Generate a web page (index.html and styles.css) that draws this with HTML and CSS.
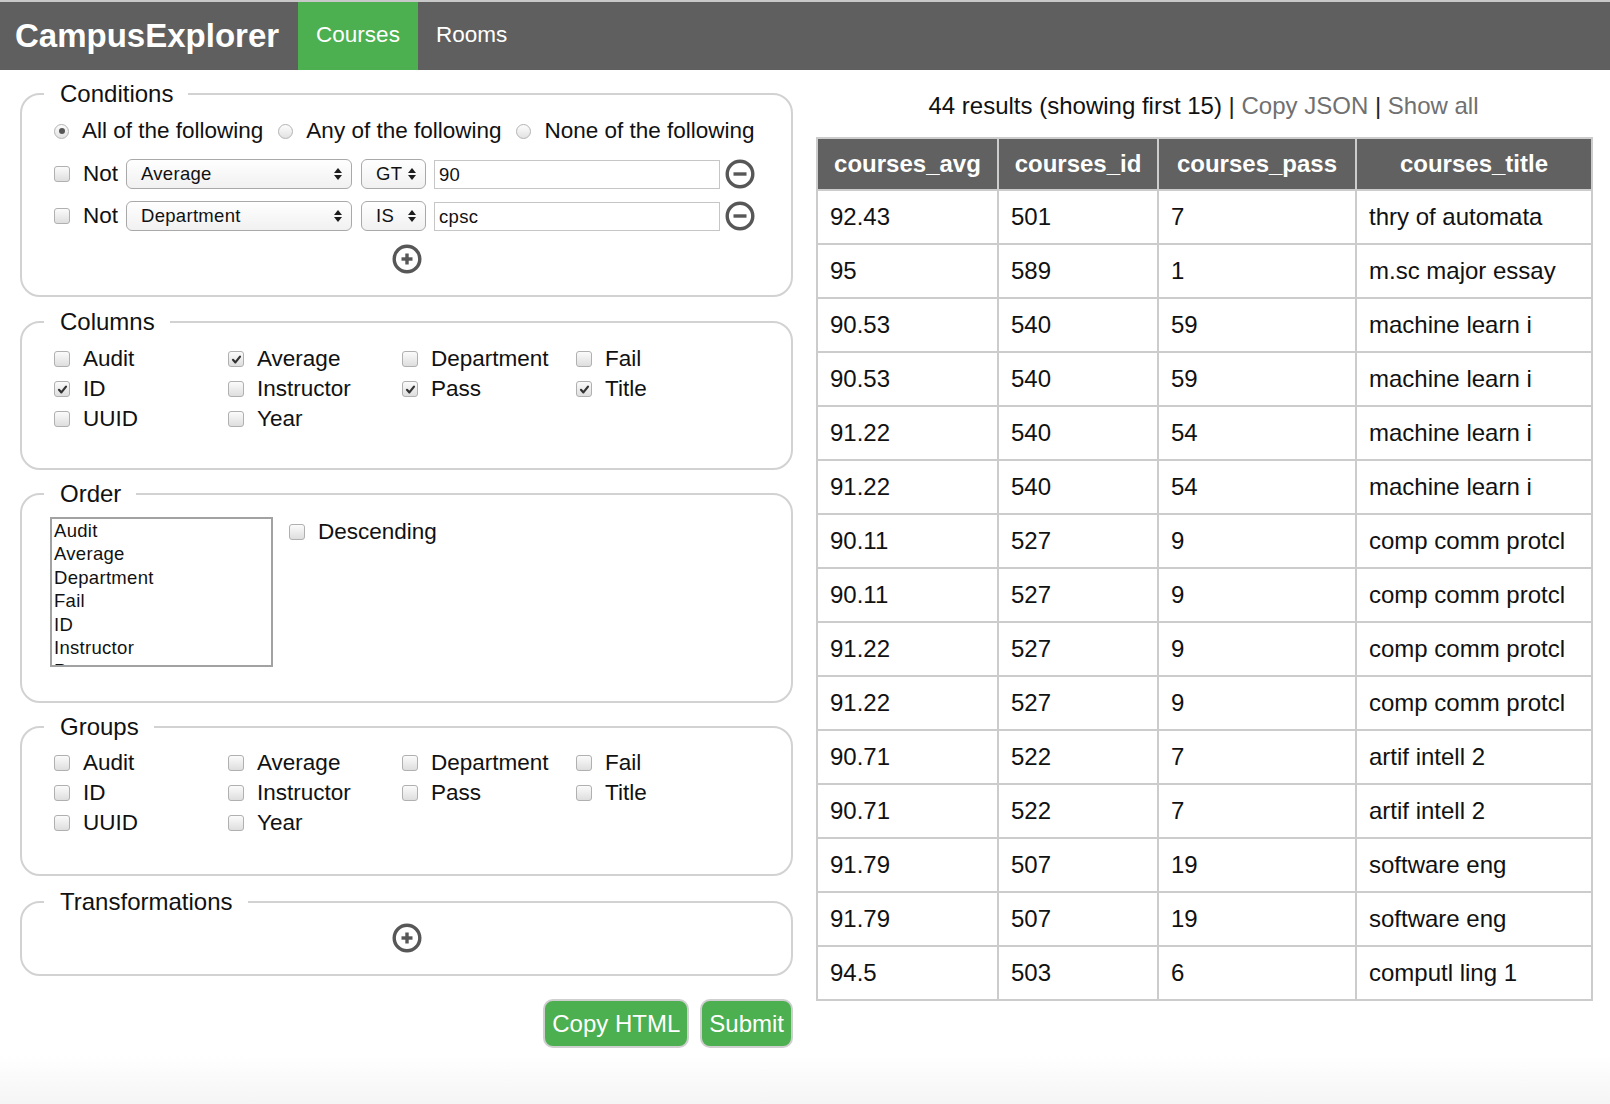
FILE: index.html
```html
<!DOCTYPE html>
<html lang="en">
<head>
<meta charset="utf-8">
<title>CampusExplorer</title>
<link rel="stylesheet" href="styles.css">
</head>
<body>
<header class="nav">
  <div class="brand">CampusExplorer</div>
  <a class="tab active">Courses</a>
  <a class="tab">Rooms</a>
</header>
<main class="main">
  <section class="form">
    <fieldset class="fs fs-cond">
      <legend>Conditions</legend>
      <div class="radios">
        <label class="rad"><span class="rb on"></span>All of the following</label>
        <label class="rad"><span class="rb"></span>Any of the following</label>
        <label class="rad"><span class="rb"></span>None of the following</label>
      </div>
      <div class="cond-row first">
        <span class="cb"></span><span class="not">Not</span>
        <div class="sel sel-field"><span>Average</span><svg width="8" height="14" viewBox="0 0 8 14"><polygon points="0,6 4,1 8,6" /><polygon points="0,8 4,13 8,8" /></svg></div>
        <div class="sel sel-op"><span>GT</span><svg width="8" height="14" viewBox="0 0 8 14"><polygon points="0,6 4,1 8,6" /><polygon points="0,8 4,13 8,8" /></svg></div>
        <div class="inp">90</div>
        <svg class="icon" width="30" height="30" viewBox="0 0 30 30"><circle cx="15" cy="15" r="12.8" /><line x1="8.5" y1="15" x2="21.5" y2="15" /></svg>
      </div>
      <div class="cond-row">
        <span class="cb"></span><span class="not">Not</span>
        <div class="sel sel-field"><span>Department</span><svg width="8" height="14" viewBox="0 0 8 14"><polygon points="0,6 4,1 8,6" /><polygon points="0,8 4,13 8,8" /></svg></div>
        <div class="sel sel-op"><span>IS</span><svg width="8" height="14" viewBox="0 0 8 14"><polygon points="0,6 4,1 8,6" /><polygon points="0,8 4,13 8,8" /></svg></div>
        <div class="inp">cpsc</div>
        <svg class="icon" width="30" height="30" viewBox="0 0 30 30"><circle cx="15" cy="15" r="12.8" /><line x1="8.5" y1="15" x2="21.5" y2="15" /></svg>
      </div>
      <div class="add">
        <svg class="icon" width="30" height="30" viewBox="0 0 30 30"><circle cx="15" cy="15" r="12.8" /><line x1="9.5" y1="15" x2="20.5" y2="15" /><line x1="15" y1="9.5" x2="15" y2="20.5" /></svg>
      </div>
    </fieldset>

    <fieldset class="fs fs-cols">
      <legend>Columns</legend>
      <div class="grid">
        <label class="chk"><span class="cb"></span>Audit</label>
        <label class="chk"><span class="cb on"><svg width="13" height="13" viewBox="0 0 13 13"><path d="M3 6.8 L5.4 9.4 L10 3.6" /></svg></span>Average</label>
        <label class="chk"><span class="cb"></span>Department</label>
        <label class="chk"><span class="cb"></span>Fail</label>
        <label class="chk"><span class="cb on"><svg width="13" height="13" viewBox="0 0 13 13"><path d="M3 6.8 L5.4 9.4 L10 3.6" /></svg></span>ID</label>
        <label class="chk"><span class="cb"></span>Instructor</label>
        <label class="chk"><span class="cb on"><svg width="13" height="13" viewBox="0 0 13 13"><path d="M3 6.8 L5.4 9.4 L10 3.6" /></svg></span>Pass</label>
        <label class="chk"><span class="cb on"><svg width="13" height="13" viewBox="0 0 13 13"><path d="M3 6.8 L5.4 9.4 L10 3.6" /></svg></span>Title</label>
        <label class="chk"><span class="cb"></span>UUID</label>
        <label class="chk"><span class="cb"></span>Year</label>
      </div>
    </fieldset>

    <fieldset class="fs fs-order">
      <legend>Order</legend>
      <div class="order-row">
        <div class="listbox">
          <div>Audit</div>
          <div>Average</div>
          <div>Department</div>
          <div>Fail</div>
          <div>ID</div>
          <div>Instructor</div>
          <div>Pass</div>
        </div>
        <label class="chk desc"><span class="cb"></span>Descending</label>
      </div>
    </fieldset>

    <fieldset class="fs fs-groups">
      <legend>Groups</legend>
      <div class="grid">
        <label class="chk"><span class="cb"></span>Audit</label>
        <label class="chk"><span class="cb"></span>Average</label>
        <label class="chk"><span class="cb"></span>Department</label>
        <label class="chk"><span class="cb"></span>Fail</label>
        <label class="chk"><span class="cb"></span>ID</label>
        <label class="chk"><span class="cb"></span>Instructor</label>
        <label class="chk"><span class="cb"></span>Pass</label>
        <label class="chk"><span class="cb"></span>Title</label>
        <label class="chk"><span class="cb"></span>UUID</label>
        <label class="chk"><span class="cb"></span>Year</label>
      </div>
    </fieldset>

    <fieldset class="fs fs-trans">
      <legend>Transformations</legend>
      <div class="add">
        <svg class="icon" width="30" height="30" viewBox="0 0 30 30"><circle cx="15" cy="15" r="12.8" /><line x1="9.5" y1="15" x2="20.5" y2="15" /><line x1="15" y1="9.5" x2="15" y2="20.5" /></svg>
      </div>
    </fieldset>

    <div class="actions">
      <button class="btn">Copy HTML</button>
      <button class="btn">Submit</button>
    </div>
  </section>

  <section class="results">
    <p class="summary">44 results (showing first 15) <span class="sep">|</span> <a class="link">Copy JSON</a> <span class="sep">|</span> <a class="link">Show all</a></p>
    <table class="tbl">
      <colgroup>
        <col class="c1"><col class="c2"><col class="c3"><col class="c4">
      </colgroup>
      <thead>
        <tr><th>courses_avg</th><th>courses_id</th><th>courses_pass</th><th>courses_title</th></tr>
      </thead>
      <tbody>
        <tr><td>92.43</td><td>501</td><td>7</td><td>thry of automata</td></tr>
        <tr><td>95</td><td>589</td><td>1</td><td>m.sc major essay</td></tr>
        <tr><td>90.53</td><td>540</td><td>59</td><td>machine learn i</td></tr>
        <tr><td>90.53</td><td>540</td><td>59</td><td>machine learn i</td></tr>
        <tr><td>91.22</td><td>540</td><td>54</td><td>machine learn i</td></tr>
        <tr><td>91.22</td><td>540</td><td>54</td><td>machine learn i</td></tr>
        <tr><td>90.11</td><td>527</td><td>9</td><td>comp comm protcl</td></tr>
        <tr><td>90.11</td><td>527</td><td>9</td><td>comp comm protcl</td></tr>
        <tr><td>91.22</td><td>527</td><td>9</td><td>comp comm protcl</td></tr>
        <tr><td>91.22</td><td>527</td><td>9</td><td>comp comm protcl</td></tr>
        <tr><td>90.71</td><td>522</td><td>7</td><td>artif intell 2</td></tr>
        <tr><td>90.71</td><td>522</td><td>7</td><td>artif intell 2</td></tr>
        <tr><td>91.79</td><td>507</td><td>19</td><td>software eng</td></tr>
        <tr><td>91.79</td><td>507</td><td>19</td><td>software eng</td></tr>
        <tr><td>94.5</td><td>503</td><td>6</td><td>computl ling 1</td></tr>
      </tbody>
    </table>
  </section>
</main>
</body>
</html>
```
FILE: styles.css
```css
* { box-sizing: border-box; }
html, body { margin: 0; padding: 0; }
body {
  font-family: "Liberation Sans", Arial, Helvetica, sans-serif;
  color: #111;
  min-height: 1104px;
  background: linear-gradient(to bottom, #fff 0, #fff 1055px, #f5f5f5 1104px);
}

/* nav */
.nav {
  display: flex;
  align-items: stretch;
  height: 70px;
  background: #5f5f5f;
  border-top: 2px solid #c8c8c8;
}
.brand {
  display: flex;
  align-items: center;
  padding: 0 19px 1px 15px;
  font-size: 33px;
  font-weight: bold;
  color: #fff;
}
.tab {
  display: flex;
  align-items: center;
  padding: 0 18px 2px;
  font-size: 22.5px;
  color: #fff;
}
.tab.active { background: #4caf50; }

/* layout */
.main {
  display: flex;
  align-items: flex-start;
  gap: 23px;
  padding: 0 19px 0 20px;
}
.form { width: 773px; flex: none; padding-top: 10px; }
.results { flex: 1; min-width: 0; }

/* fieldsets */
.fs {
  margin: 0 0 10px;
  min-width: 0;
  border: 2px solid #d2d2d2;
  border-radius: 20px;
  padding: 7px 0 0 32px;
}
.fs legend {
  font-size: 24px;
  line-height: 28px;
  padding: 0 15px 0 16px;
  margin-left: -10px;
  color: #111;
}
.fs-cond { padding-top: 8px; padding-bottom: 21px; margin-bottom: 11px; }
.fs-cols { padding-top: 8px; padding-bottom: 34px; }
.fs-order { padding-top: 9px; padding-bottom: 34px; }
.fs-groups { padding-bottom: 36px; margin-bottom: 12px; }
.fs-trans { padding-bottom: 21px; }

/* radios */
.radios { display: flex; align-items: center; height: 30px; font-size: 22.5px; }
.rad { display: flex; align-items: center; margin-right: 15px; }
.rb {
  width: 15px; height: 15px;
  border-radius: 50%;
  border: 1px solid #b3b3b3;
  background: linear-gradient(#fdfdfd, #e2e2e2);
  margin-right: 13px;
  display: inline-flex;
  align-items: center;
  justify-content: center;
}
.rb.on::after {
  content: "";
  width: 6px; height: 6px;
  border-radius: 50%;
  background: #555;
}

/* checkboxes */
.cb {
  flex: none;
  width: 16px; height: 16px;
  border-radius: 3px;
  border: 1px solid #b0b0b0;
  background: linear-gradient(#fbfbfb, #dedede);
  display: inline-flex;
  align-items: center;
  justify-content: center;
}
.cb svg path { fill: none; stroke: #333; stroke-width: 2.2; stroke-linecap: round; stroke-linejoin: round; }
.chk { display: flex; align-items: center; height: 30px; font-size: 22.5px; }
.chk .cb { margin-right: 13px; }

/* condition rows */
.cond-row { display: flex; align-items: center; height: 30px; margin-top: 12px; }
.cond-row.first { margin-top: 13px; }
.not { font-size: 22.5px; margin: 0 8px 0 13px; }
.sel {
  display: flex;
  align-items: center;
  justify-content: space-between;
  height: 30px;
  border: 1px solid #a9a9a9;
  border-radius: 6px;
  background: linear-gradient(#ffffff, #f1f1f1);
  font-size: 18.5px;
  letter-spacing: 0.3px;
  padding: 0 9px 0 14px;
}
.sel svg polygon { fill: #1e1e1e; }
.sel-field { width: 226px; margin-right: 9px; }
.sel-op { width: 65px; margin-right: 8px; padding-left: 14px; }
.inp {
  width: 286px;
  height: 29px;
  border: 1px solid #c6c6c6;
  font-size: 18.5px;
  letter-spacing: 0.3px;
  line-height: 27px;
  padding-left: 4px;
  margin-right: 5px;
}
.icon circle { fill: none; stroke: #575757; stroke-width: 3.4; }
.icon line { stroke: #575757; stroke-width: 3.4; }
.add { display: flex; justify-content: center; margin-left: -32px; margin-top: 13px; height: 30px; }
.fs-trans .add { margin-top: 0; }

/* grid of checkboxes */
.grid { display: grid; grid-template-columns: repeat(4, 174px); }

/* order */
.order-row { display: flex; align-items: flex-start; }
.listbox {
  width: 223px;
  height: 150px;
  margin-left: -4px;
  margin-right: 16px;
  border: 2px solid #a2a2a2;
  overflow: hidden;
  font-size: 18.5px;
  letter-spacing: 0.3px;
  line-height: 23.4px;
}
.listbox div { padding-left: 2px; white-space: nowrap; }

/* buttons */
.actions { display: flex; justify-content: flex-end; gap: 11px; margin-top: 23px; }
.btn {
  height: 49px;
  padding: 0 7px;
  border: 2px solid #cfcfcf;
  border-radius: 10px;
  background: #4caf50;
  color: #fff;
  font-family: "Liberation Sans", Arial, sans-serif;
  font-size: 24px;
}

/* results */
.summary {
  margin: 21px 0 16px;
  line-height: 30px;
  font-size: 24px;
  text-align: center;
  color: #111;
}
.summary .link { color: #707070; }
.summary .sep { color: #222; }

.tbl {
  width: 100%;
  border-collapse: collapse;
  border: 2px solid #cccccc;
  font-size: 24px;
  table-layout: fixed;
}
.tbl .c1 { width: 181px; }
.tbl .c2 { width: 160px; }
.tbl .c3 { width: 198px; }
.tbl .c4 { width: 236px; }
.tbl th {
  height: 52px;
  background: #616161;
  color: #fff;
  font-weight: bold;
  text-align: center;
  border: 2px solid #cccccc;
  padding: 0;
}
.tbl td {
  height: 54px;
  border: 2px solid #cccccc;
  padding: 0 12px;
  color: #111;
  white-space: nowrap;
}
```
